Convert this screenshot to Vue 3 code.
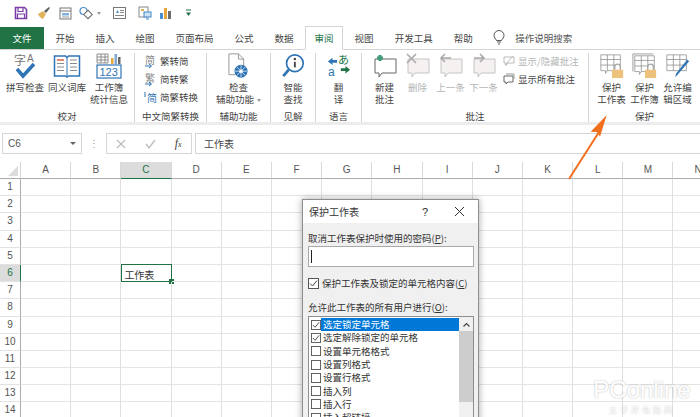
<template>
  <div class="app">
    <!-- 快速访问工具栏 -->
    <div class="qat">
      <svg class="q" style="margin-left:14px" width="14" height="14" viewBox="0 0 14 14"><path d="M1.500 1.500h9l2 2v9h-11z" fill="none" stroke="#7b3fa6" stroke-width="1.600"/><path d="M4 2v3.500h5V2M3.500 12V8h7v4" fill="none" stroke="#7b3fa6" stroke-width="1.200"/></svg>
      <svg class="q" style="margin-left:9px" width="14" height="14" viewBox="0 0 14 14"><path d="M1 8l5-3 3 3-3 5c-2-.5-4-2.500-5-5z" fill="#e3b35c"/><path d="M7 5l5-4 1 1-4 5z" fill="#5f5f5f"/></svg>
      <svg class="q" style="margin-left:8px" width="13" height="13" viewBox="0 0 13 13"><rect x="1" y="1" width="11" height="11" fill="#fff" stroke="#777"/><path d="M1 4h11" stroke="#777"/><rect x="3" y="6" width="7" height="2.500" fill="#7fb1dc"/><path d="M3 10h7" stroke="#999"/></svg>
      <svg class="q" style="margin-left:7px" width="14" height="14" viewBox="0 0 14 14"><circle cx="4.500" cy="5" r="3.500" fill="none" stroke="#4f8ecb" stroke-width="1.200"/><rect x="6" y="5.500" width="6" height="6" transform="rotate(45 9 8.500)" fill="#fff" stroke="#666"/></svg>
      <span class="q-caret" style="margin-left:4px"></span>
      <svg class="q" style="margin-left:12px" width="13" height="12" viewBox="0 0 13 12"><rect x=".5" y=".5" width="12" height="11" fill="#fff" stroke="#777"/><path d="M3 6l1.500-3L6 6z" fill="#4f8ecb"/><path d="M7 3.500h4M7 5.500h4M2 8.500h9" stroke="#888"/></svg>
      <svg class="q" style="margin-left:12px" width="14" height="14" viewBox="0 0 14 14"><rect x="1" y="1" width="9" height="10" fill="#fff" stroke="#888"/><rect x="6" y="6" width="7" height="5" fill="#cfe3f5" stroke="#3f87c8"/><path d="M8 13h3" stroke="#3f87c8"/><rect x="3" y="3" width="3" height="2" fill="#e0b25c"/></svg>
      <svg class="q" style="margin-left:7px" width="13" height="13" viewBox="0 0 13 13"><rect x="1" y="6" width="3" height="6" fill="#4a90d0"/><rect x="5" y="1" width="3" height="11" fill="#e6a83c"/><rect x="9" y="4" width="3" height="8" fill="#6d6d6d"/></svg>
      <svg class="q" style="margin-left:13px" width="7" height="8" viewBox="0 0 7 8"><path d="M1 1h5" stroke="#217346"/><path d="M1 3.500h5L3.500 7z" fill="#217346"/></svg>
    </div>

    <!-- 选项卡 -->
    <div class="tabs">
      <div class="tab file">文件</div>
      <div v-for="t in tabs" :key="t" class="tab" :class="{ active: t === '审阅' }">{{ t }}</div>
      <svg class="bulb" width="12" height="15" viewBox="0 0 12 15"><path d="M3.500 10.500C2.500 8.500 1 7.500 1 5.500a5 5 0 0 1 10 0c0 2-1.500 3-2.500 5z" fill="none" stroke="#555"/><path d="M4 12h4M5 14h2" stroke="#555"/></svg>
      <div class="search">操作说明搜索</div>
    </div>

    <!-- 功能区 -->
    <div class="ribbon">
      <div class="group" style="width:135px">
        <div class="group-body" style="padding-left:4px">
          <div class="big w42">
            <svg width="24" height="26" viewBox="0 0 24 26"><text x="1" y="12" class="ico-t" fill="#777" font-size="12">字</text><text x="14" y="9" class="ico-l" fill="#777" font-size="10">A</text><path d="M4 16l6 7L21 11" fill="none" stroke="#2f75b5" stroke-width="3.500"/></svg>
            <span>拼写检查</span>
          </div>
          <div class="big w42">
            <svg width="28" height="26" viewBox="0 0 28 24"><path d="M1.500 2h11l1.500 1.500L15.500 2h11v20h-11L14 23l-1.500-1h-11z" fill="#fff" stroke="#2f75b5" stroke-width="1.500"/><path d="M14 3.500V22" stroke="#2f75b5"/><path d="M4 6h7" stroke="#d9613b" stroke-width="1.500"/><path d="M4 9.500h7M4 13h7M4 16.500h7M17 6h7M17 9.500h7M17 13h7M17 16.500h7" stroke="#8a8a8a"/></svg>
            <span>同义词库</span>
          </div>
          <div class="big w42">
            <svg width="26" height="26" viewBox="0 0 26 26"><path d="M1 1h11v9H1zM1 4h11M1 7h11M5 1v9M9 1v9" fill="#fff" stroke="#777" stroke-width=".800"/><rect x="15" y="5" width="2.500" height="6" fill="#e6a83c"/><rect x="18.500" y="1" width="2.500" height="10" fill="#7fa7cf"/><rect x="22" y="4" width="2.500" height="7" fill="#666"/><rect x="1" y="12" width="24" height="13" fill="#fff" stroke="#2f75b5" stroke-width="1.200"/><text x="3.500" y="23" font-size="11" fill="#2f75b5" class="ico-l">123</text></svg>
            <span>工作簿<br>统计信息</span>
          </div>
        </div>
        <div class="group-label">校对</div>
      </div>

      <div class="group" style="width:72px">
        <div class="group-body col tight" style="padding-left:10px">
          <div class="small">
            <svg width="12" height="14" viewBox="0 0 12 14"><text x="0" y="10" font-size="10" class="ico-t" fill="#888">简</text><path d="M0 12h6M4 10l2.500 2L4 14" fill="none" stroke="#2f75b5"/></svg>
            <span>繁转简</span>
          </div>
          <div class="small">
            <svg width="12" height="14" viewBox="0 0 12 14"><text x="0" y="10" font-size="10" class="ico-t" fill="#888">繁</text><path d="M0 12h6M4 10l2.500 2L4 14" fill="none" stroke="#2f75b5"/></svg>
            <span>简转繁</span>
          </div>
          <div class="small">
            <svg width="12" height="14" viewBox="0 0 12 14"><text x="2" y="12" font-size="10" class="ico-t" fill="#2f75b5">简</text><path d="M0 2v5" stroke="#2f75b5"/></svg>
            <span>简繁转换</span>
          </div>
        </div>
        <div class="group-label">中文简繁转换</div>
      </div>

      <div class="group" style="width:64px">
        <div class="group-body center">
          <div class="big">
            <svg width="24" height="26" viewBox="0 0 24 30"><path d="M1.500 1h11l6 6v11M1.500 1v24H9" fill="#fff" stroke="#8a8a8a"/><path d="M12.500 1v6h6" fill="none" stroke="#8a8a8a"/><circle cx="15.500" cy="21" r="7.500" fill="#2f75b5"/><circle cx="15.500" cy="21" r="2" fill="#fff"/><path d="M15.500 14v14M8.500 21h14M10.500 16l10 10M20.500 16l-10 10" stroke="#fff" stroke-width=".800"/></svg>
            <span>检查<br>辅助功能<i class="q-caret dd"></i></span>
          </div>
        </div>
        <div class="group-label">辅助功能</div>
      </div>

      <div class="group" style="width:45px">
        <div class="group-body center">
          <div class="big">
            <svg width="24" height="26" viewBox="0 0 24 28"><circle cx="14" cy="11" r="9" fill="#fff" stroke="#2f75b5" stroke-width="1.800"/><path d="M7.500 18L1.500 25" stroke="#2f75b5" stroke-width="3"/><circle cx="14" cy="6.500" r="1.300" fill="#444"/><path d="M14 9.500v6" stroke="#444" stroke-width="2"/></svg>
            <span>智能<br>查找</span>
          </div>
        </div>
        <div class="group-label">见解</div>
      </div>

      <div class="group" style="width:46px">
        <div class="group-body center">
          <div class="big">
            <svg width="24" height="26" viewBox="0 0 26 28"><text x="12" y="12" font-size="12" fill="#217346" class="ico-t">あ</text><text x="1" y="25" font-size="13" fill="#2f75b5" class="ico-l">a</text><path d="M1 9l5-4v2.500h5v3H6V13z" fill="#2f75b5"/><path d="M25 18l-5 4v-2.500h-5v-3h5V14z" fill="#217346"/></svg>
            <span>翻<br>译</span>
          </div>
        </div>
        <div class="group-label">语言</div>
      </div>

      <div class="group" style="width:227px">
        <div class="group-body" style="padding-left:6px">
          <div class="big w33">
            <svg width="26" height="26" viewBox="0 0 26 26"><path d="M3 6h21v14H10l-3 4v-4H3z" fill="#fff" stroke="#666"/><path d="M5 5h6M8 2v6" stroke="#3f9a78" stroke-width="3"/></svg>
            <span>新建<br>批注</span>
          </div>
          <div class="big w33 off">
            <svg width="26" height="26" viewBox="0 0 26 26"><path d="M3 6h21v14H10l-3 4v-4H3z" fill="#f6f1f1" stroke="#c4c4c4"/><path d="M2 1l9 9M11 1l-9 9" stroke="#a9a9a9" stroke-width="1.600"/></svg>
            <span>删除</span>
          </div>
          <div class="big w33 off">
            <svg width="26" height="26" viewBox="0 0 26 26"><path d="M3 6h21v14H10l-3 4v-4H3z" fill="#f6f1f1" stroke="#c4c4c4"/><path d="M13 5H3M7 1L3 5l4 4" fill="none" stroke="#a9a9a9" stroke-width="1.600"/></svg>
            <span>上一条</span>
          </div>
          <div class="big w33 off">
            <svg width="26" height="26" viewBox="0 0 26 26"><path d="M3 6h21v14H10l-3 4v-4H3z" fill="#f6f1f1" stroke="#c4c4c4"/><path d="M3 5h10M9 1l4 4-4 4" fill="none" stroke="#a9a9a9" stroke-width="1.600"/></svg>
            <span>下一条</span>
          </div>
          <div class="col tight" style="padding-left:3px">
            <div class="small off">
              <svg width="12" height="12" viewBox="0 0 12 12"><path d="M1 2h10v6H5L3 10.500V8H1z" fill="none" stroke="#bbb"/><path d="M2 10l8-9" stroke="#bbb"/></svg>
              <span>显示/隐藏批注</span>
            </div>
            <div class="small">
              <svg width="12" height="12" viewBox="0 0 12 12"><path d="M1 3h9v6H5L3 11V9H1z" fill="#fff" stroke="#666"/><path d="M3 1h8v5" fill="none" stroke="#999"/></svg>
              <span>显示所有批注</span>
            </div>
          </div>
        </div>
        <div class="group-label">批注</div>
      </div>

      <div class="group last" style="width:111px">
        <div class="group-body" style="padding-left:6px">
          <div class="big w33">
            <svg width="28" height="26" viewBox="0 0 30 28"><path d="M3 2h21v17H10l-2 3v-3H3zM3 7h21M3 13h21M10 2v17M17 2v17" fill="#fff" stroke="#8a8a8a" stroke-width=".800"/><path d="M18 18v-3a3 3 0 0 1 6 0v3" fill="#fff" stroke="#a8a8a8" stroke-width="1.500"/><rect x="15" y="18" width="12" height="9" fill="#edc27d"/></svg>
            <span>保护<br>工作表</span>
          </div>
          <div class="big w33">
            <svg width="28" height="26" viewBox="0 0 30 28"><path d="M2 1h22M2 1v19" stroke="#999" fill="none"/><path d="M4 3h21v17H11l-2 3v-3H4zM4 8h21M4 14h21M11 3v17M18 3v17" fill="#fff" stroke="#8a8a8a" stroke-width=".800"/><path d="M18 18v-3a3 3 0 0 1 6 0v3" fill="#fff" stroke="#a8a8a8" stroke-width="1.500"/><rect x="15" y="18" width="12" height="9" fill="#edc27d"/></svg>
            <span>保护<br>工作簿</span>
          </div>
          <div class="big w33">
            <svg width="28" height="26" viewBox="0 0 30 28"><path d="M3 2h21v17H3zM3 7h21M3 13h21M10 2v17M17 2v17" fill="#fff" stroke="#8a8a8a" stroke-width=".800"/><path d="M27 9L15 23l-3 3 1-4L25 7z" fill="#2f75b5"/></svg>
            <span>允许编<br>辑区域</span>
          </div>
        </div>
        <div class="group-label">保护</div>
      </div>
    </div>

    <!-- 编辑栏 -->
    <div class="formula">
      <div class="namebox">C6<i class="nb-caret"></i></div>
      <div class="dots">⋮</div>
      <div class="fx-btns">
        <svg width="10" height="10" viewBox="0 0 10 10"><path d="M1 1l8 8M9 1L1 9" stroke="#bdbdbd" stroke-width="1.200"/></svg>
        <svg width="11" height="10" viewBox="0 0 11 10"><path d="M1 5l3 4 6-8" fill="none" stroke="#bdbdbd" stroke-width="1.300"/></svg>
        <span class="fx">f<small>x</small></span>
      </div>
      <div class="fx-input">工作表</div>
    </div>

    <!-- 表格 -->
    <div class="sheet">
      <div class="head-row">
        <div class="corner"><i></i></div>
        <div v-for="c in cols" :key="c" class="col-h" :class="{ on: c === 'C' }">{{ c }}</div>
      </div>
      <div v-for="r in rows" :key="r" class="row">
        <div class="row-h" :class="{ on: r === 6 }">{{ r }}</div>
        <div v-for="c in cols" :key="c" class="cell" :class="{ sel: r === 6 && c === 'C' }">
          <template v-if="r === 6 && c === 'C'">工作表<i class="handle"></i></template>
        </div>
      </div>
    </div>

    <!-- 标注箭头 -->
    <svg class="arrow" width="42" height="70" viewBox="0 0 42 70"><path d="M1 67L31 20" stroke="#f26f1d" stroke-width="2"/><path d="M38.700 3L32 24.700 29 20l-6.300-.3z" fill="#f26f1d"/></svg>

    <!-- 对话框 -->
    <div class="dialog">
      <div class="d-title">
        <span>保护工作表</span>
        <span class="d-help">?</span>
        <svg width="11" height="11" viewBox="0 0 11 11"><path d="M1 1l9 9M10 1l-9 9" stroke="#333"/></svg>
      </div>
      <div class="d-body">
        <div>取消工作表保护时使用的密码(<u>P</u>):</div>
        <div class="d-input"><i></i></div>
        <div class="d-check">
          <svg class="cb" width="11" height="11" viewBox="0 0 11 11"><rect x=".5" y=".5" width="10" height="10" fill="#fff" stroke="#555"/><path d="M2 5.500l2.500 2.500L9 2.500" fill="none" stroke="#444"/></svg>
          <span>保护工作表及锁定的单元格内容(<u>C</u>)</span>
        </div>
        <div class="d-allow">允许此工作表的所有用户进行(<u>O</u>):</div>
        <div class="d-list">
          <div class="d-items">
            <div v-for="(it, i) in perms" :key="it" class="d-item">
              <svg class="cb" width="10" height="10" viewBox="0 0 11 11"><rect x=".5" y=".5" width="10" height="10" fill="#fff" stroke="#555"/><path v-if="i < 2" d="M2 5.500l2.500 2.500L9 2.500" fill="none" stroke="#444"/></svg>
              <span :class="{ hl: i === 0 }">{{ it }}</span>
            </div>
          </div>
          <div class="d-scroll">
            <div class="d-up"><svg width="7" height="5" viewBox="0 0 7 5"><path d="M.5 4.500l3-3 3 3" fill="none" stroke="#444" stroke-width="1.200"/></svg></div>
            <div class="d-thumb"></div>
          </div>
        </div>
      </div>
    </div>

    <!-- 水印 -->
    <div class="mark">
      <div class="mark-a">PConline</div>
      <div class="mark-b">太平洋电脑网</div>
    </div>
  </div>
</template>

<script setup>
const tabs = ["开始", "插入", "绘图", "页面布局", "公式", "数据", "审阅", "视图", "开发工具", "帮助"];
const cols = "ABCDEFGHIJKLMN".split("");
const rows = Array.from({ length: 14 }, (_, i) => i + 1);
const perms = [
  "选定锁定单元格",
  "选定解除锁定的单元格",
  "设置单元格格式",
  "设置列格式",
  "设置行格式",
  "插入列",
  "插入行",
  "插入超链接",
];
</script>

<style>
html,
body {
  margin: 0;
  background: #fff;
}
</style>

<style scoped>
.app {
  position: relative;
  width: 700px;
  height: 417px;
  overflow: hidden;
  background: #fff;
  color: #444;
  font-family: "Noto Sans CJK SC", "Liberation Sans", sans-serif;
  font-size: 9.5px;
  line-height: 12px;
}
svg {
  flex: none;
  display: block;
  overflow: visible;
}
i {
  font-style: normal;
}

.qat {
  display: flex;
  align-items: center;
  height: 26px;
}
.q-caret {
  display: inline-block;
  width: 0;
  height: 0;
  border: 2.500px solid transparent;
  border-top: 3px solid #999;
  border-bottom: 0;
}

.tabs {
  display: flex;
  align-items: stretch;
  height: 24px;
  border-bottom: 1px solid #d4d4d4;
  box-sizing: border-box;
}
.tab {
  display: flex;
  align-items: center;
  padding: 0 10.500px;
  margin-bottom: -1px;
}
.tab.file {
  width: 44px;
  height: 22px;
  margin: 1px 1px 0 0;
  padding: 0;
  justify-content: center;
  box-sizing: border-box;
  background: #217346;
  color: #fff;
}
.tab.active {
  margin: 0 1px -1px;
  padding: 0 8.500px;
  border: 1px solid #d4d4d4;
  border-bottom: 1px solid #fff;
  background: #fff;
  color: #217346;
}
.bulb {
  align-self: center;
  margin-left: 10px;
}
.search {
  align-self: center;
  margin-left: 10px;
  color: #555;
}

.ribbon {
  display: flex;
  height: 75px;
  padding-top: 3px;
  box-sizing: border-box;
  border-bottom: 3px solid #ececec;
}
.group {
  display: flex;
  flex-direction: column;
  flex: none;
  height: 69px;
  box-sizing: border-box;
  border-right: 1px solid #d6d6d6;
}
.group.last {
  border-right: 0;
}
.group-body {
  display: flex;
  flex: 1;
  min-height: 0;
}
.group-body.center {
  justify-content: center;
}
.col {
  display: flex;
  flex-direction: column;
}
.tight {
  margin-top: -1px;
}
.group-label {
  height: 12px;
  line-height: 12px;
  text-align: center;
  white-space: nowrap;
}
.big {
  display: flex;
  flex-direction: column;
  align-items: center;
  flex: none;
  text-align: center;
  white-space: nowrap;
}
.big svg {
  margin-bottom: 2px;
}
.w42 {
  width: 42px;
}
.w33 {
  width: 33px;
}
.off {
  color: #b5b5b5;
}
.small {
  display: flex;
  align-items: center;
  gap: 3px;
  height: 18px;
  white-space: nowrap;
}
.ico-t {
  font-family: "Noto Sans CJK SC", sans-serif;
}
.ico-l {
  font-family: "Liberation Sans", sans-serif;
}
.dd {
  margin-left: 3px;
  vertical-align: middle;
}

.formula {
  display: flex;
  align-items: stretch;
  height: 21px;
  margin: 8px 0 8px 2px;
}
.namebox {
  display: flex;
  align-items: center;
  justify-content: space-between;
  width: 80px;
  padding: 0 5px;
  box-sizing: border-box;
  border: 1px solid #d6d6d6;
  font-family: "Liberation Sans", sans-serif;
  font-size: 10px;
  color: #555;
}
.nb-caret {
  border: 3px solid transparent;
  border-top: 3px solid #666;
  border-bottom: 0;
}
.dots {
  width: 24px;
  text-align: center;
  line-height: 20px;
  color: #999;
}
.fx-btns {
  display: flex;
  align-items: center;
  justify-content: space-around;
  width: 86px;
  box-sizing: border-box;
  border: 1px solid #d6d6d6;
}
.fx {
  font-family: "Liberation Serif", serif;
  font-style: italic;
  font-size: 12px;
  color: #444;
}
.fx small {
  font-size: 8px;
}
.fx-input {
  display: flex;
  align-items: center;
  flex: 1;
  margin-left: 3px;
  padding-left: 8px;
  border: 1px solid #d6d6d6;
  border-right: 0;
  font-size: 10px;
}

.head-row,
.row {
  display: grid;
  grid-template-columns: 21px repeat(14, 50.2px);
}
.head-row {
  height: 17px;
  color: #555;
}
.corner {
  position: relative;
  border-bottom: 1px solid #ababab;
  border-right: 1px solid #d4d4d4;
}
.corner i {
  position: absolute;
  right: 2px;
  bottom: 2px;
  border: 5px solid transparent;
  border-right-color: #dcdcdc;
  border-bottom-color: #dcdcdc;
}
.col-h {
  text-align: center;
  line-height: 16px;
  font-family: "Liberation Sans", sans-serif;
  font-size: 10px;
  border-right: 1px solid #d8d8d8;
  border-bottom: 1px solid #ababab;
}
.col-h.on {
  background: #dcdcdc;
  color: #217346;
  border-bottom: 1px solid #217346;
}
.row {
  height: 17.200px;
}
.row-h {
  text-align: center;
  line-height: 16px;
  font-family: "Liberation Sans", sans-serif;
  font-size: 10px;
  color: #555;
  border-right: 1px solid #ababab;
  border-bottom: 1px solid #e2e2e2;
}
.row-h.on {
  background: #dcdcdc;
  color: #217346;
  border-right: 1px solid #217346;
}
.cell {
  position: relative;
  box-sizing: border-box;
  border-right: 1px solid #dfdfdf;
  border-bottom: 1px solid #e4e4e4;
}
.cell.sel {
  margin: -1px 0 0 0;
  height: 18px;
  padding: 4px 2px 0;
  border: 1px solid #217346;
  color: #333;
  font-size: 10px;
}
.handle {
  position: absolute;
  right: -3px;
  bottom: -3px;
  width: 5px;
  height: 5px;
  background: #217346;
}

.arrow {
  position: absolute;
  left: 568px;
  top: 112px;
}

.dialog {
  position: absolute;
  left: 302px;
  top: 199px;
  width: 177px;
  height: 240px;
  box-sizing: border-box;
  border: 1px solid #8e8e8e;
  background: #f0f0f0;
  box-shadow: 0 0 7px rgba(0, 0, 0, 0.35);
  color: #333;
}
.d-title {
  display: flex;
  align-items: center;
  height: 23px;
  padding: 0 13px 0 6px;
  background: #fff;
  font-size: 10px;
}
.d-title > span:first-child {
  flex: 1;
}
.d-help {
  margin-right: 26px;
  font-family: "Liberation Sans", sans-serif;
  font-size: 11px;
}
.d-body {
  padding: 9px 4px 0 5px;
}
.d-input {
  height: 21px;
  margin-top: 2px;
  box-sizing: border-box;
  border: 1px solid #a9a9a9;
  background: #fff;
  padding: 3px 2px;
}
.d-input i {
  display: block;
  width: 1px;
  height: 13px;
  background: #222;
}
.d-check {
  display: flex;
  align-items: center;
  gap: 3px;
  margin-top: 10px;
}
.d-allow {
  margin-top: 12px;
}
.d-list {
  display: flex;
  height: 110px;
  margin-top: 3px;
  box-sizing: border-box;
  border: 1px solid #8e8e8e;
  background: #fff;
}
.d-items {
  flex: 1;
  padding: 1px 0 0 2px;
}
.d-item {
  display: flex;
  align-items: center;
  height: 13.300px;
}
.d-item .cb {
  flex: none;
}
.d-item span {
  flex: 1;
  padding-left: 2px;
  line-height: 13px;
}
.d-item .hl {
  background: #0078d7;
  color: #fff;
}
.d-scroll {
  width: 14px;
  background: #f0f0f0;
}
.d-up {
  display: flex;
  align-items: center;
  justify-content: center;
  height: 14px;
}
.d-thumb {
  height: 71px;
  background: #cdcdcd;
}

.mark {
  position: absolute;
  left: 590px;
  top: 376px;
  width: 104px;
  text-align: center;
  font-family: "Liberation Sans", sans-serif;
  color: #fff;
  text-shadow: 0 0 2px rgba(0, 0, 0, 0.3);
}
.mark-a {
  font-size: 24px;
  line-height: 28px;
}
.mark-b {
  font-family: "Noto Sans CJK SC", sans-serif;
  font-size: 8px;
  line-height: 12px;
  letter-spacing: 3px;
}
</style>
